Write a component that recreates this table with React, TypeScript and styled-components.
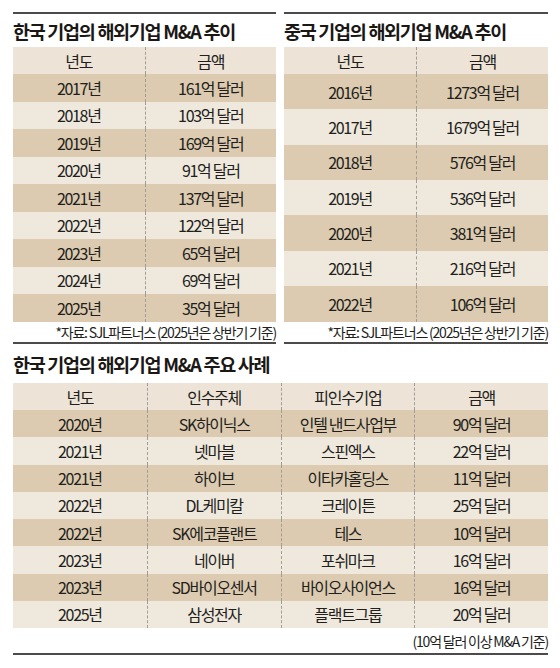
import styled, { createGlobalStyle } from 'styled-components'

const GlobalStyle = createGlobalStyle`
  body {
    margin: 0;
    background: #fff;
    font-family: 'Noto Sans CJK KR', 'Noto Sans', sans-serif;
    color: #221e1b;
  }
`

const colors = {
  line: '#4d4b49',
  head: '#ede4d7',
  dark: '#dccbb1',
  light: '#efe8dd',
  divider: '#a39c94',
}

const Page = styled.div`
  width: 560px;
  box-sizing: border-box;
  padding: 12px 12px 0 13px;
`

const TopRow = styled.div`
  display: grid;
  grid-template-columns: 263px 264px;
  column-gap: 8px;
`

const Panel = styled.section<{ $top?: boolean }>`
  border-top: ${(p) => (p.$top ? `2px solid ${colors.line}` : 'none')};
  border-bottom: 2px solid ${colors.line};
`

const Title = styled.h2<{ $h: number }>`
  margin: 0;
  height: ${(p) => p.$h}px;
  display: flex;
  align-items: center;
  font-size: 18.5px;
  font-weight: 700;
  letter-spacing: -1.3px;
  color: #1a1715;
`

const Table = styled.div<{ $cols: number }>`
  display: grid;
  grid-template-columns: repeat(${(p) => p.$cols}, 1fr);
`

const Cell = styled.div<{ $h: number; $bg: string; $first?: boolean }>`
  height: ${(p) => p.$h}px;
  background: ${(p) => p.$bg};
  display: flex;
  align-items: center;
  justify-content: center;
  font-size: 16px;
  letter-spacing: -1.3px;
  white-space: nowrap;
  color: #221e1b;
  border-left: ${(p) => (p.$first ? 'none' : `1px dashed ${colors.divider}`)};
`

const Note = styled.div<{ $h: number }>`
  height: ${(p) => p.$h}px;
  display: flex;
  align-items: center;
  justify-content: flex-end;
  font-size: 14px;
  letter-spacing: -1.2px;
  color: #221e1b;
`

type Props = {
  heads: string[]
  rows: string[][]
  rowH: number
}

const DataTable = ({ heads, rows, rowH }: Props) => (
  <Table $cols={heads.length}>
    {heads.map((h, i) => (
      <Cell key={h} $h={27} $bg={colors.head} $first={i === 0}>
        {h}
      </Cell>
    ))}
    {rows.map((r, ri) =>
      r.map((c, ci) => (
        <Cell
          key={`${ri}-${ci}`}
          $h={rowH}
          $bg={ri % 2 === 0 ? colors.dark : colors.light}
          $first={ci === 0}
        >
          {c}
        </Cell>
      ))
    )}
  </Table>
)

const korea: string[][] = [
  ['2017년', '161억 달러'],
  ['2018년', '103억 달러'],
  ['2019년', '169억 달러'],
  ['2020년', '91억 달러'],
  ['2021년', '137억 달러'],
  ['2022년', '122억 달러'],
  ['2023년', '65억 달러'],
  ['2024년', '69억 달러'],
  ['2025년', '35억 달러'],
]

const china: string[][] = [
  ['2016년', '1273억 달러'],
  ['2017년', '1679억 달러'],
  ['2018년', '576억 달러'],
  ['2019년', '536억 달러'],
  ['2020년', '381억 달러'],
  ['2021년', '216억 달러'],
  ['2022년', '106억 달러'],
]

const deals: string[][] = [
  ['2020년', 'SK하이닉스', '인텔 낸드사업부', '90억 달러'],
  ['2021년', '넷마블', '스핀엑스', '22억 달러'],
  ['2021년', '하이브', '이타카홀딩스', '11억 달러'],
  ['2022년', 'DL케미칼', '크레이튼', '25억 달러'],
  ['2022년', 'SK에코플랜트', '테스', '10억 달러'],
  ['2023년', '네이버', '포쉬마크', '16억 달러'],
  ['2023년', 'SD바이오센서', '바이오사이언스', '16억 달러'],
  ['2025년', '삼성전자', '플랙트그룹', '20억 달러'],
]

const source = '*자료: SJL파트너스 (2025년은 상반기 기준)'

export default function App() {
  return (
    <>
      <GlobalStyle />
      <Page>
        <TopRow>
          <Panel $top>
            <Title $h={33}>한국 기업의 해외기업 M&amp;A 추이</Title>
            <DataTable heads={['년도', '금액']} rows={korea} rowH={27.5} />
            <Note $h={20.5}>{source}</Note>
          </Panel>
          <Panel $top>
            <Title $h={33}>중국 기업의 해외기업 M&amp;A 추이</Title>
            <DataTable heads={['년도', '금액']} rows={china} rowH={35.36} />
            <Note $h={20.5}>{source}</Note>
          </Panel>
        </TopRow>
        <Panel>
          <Title $h={39}>한국 기업의 해외기업 M&amp;A 주요 사례</Title>
          <DataTable
            heads={['년도', '인수주체', '피인수기업', '금액']}
            rows={deals}
            rowH={27.25}
          />
          <Note $h={25}>(10억 달러 이상 M&amp;A 기준)</Note>
        </Panel>
      </Page>
    </>
  )
}
